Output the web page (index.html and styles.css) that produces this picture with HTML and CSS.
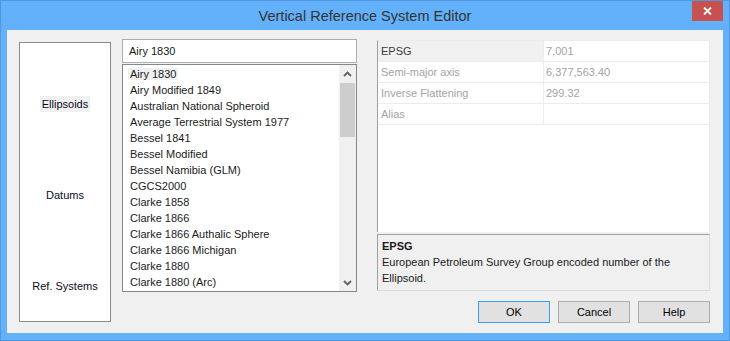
FILE: index.html
```html
<!DOCTYPE html>
<html>
<head>
    <title>Vertical Reference System Editor</title>
    <link rel="stylesheet" href="styles.css">
</head>
<body>
    <div class="window">
        <!-- Title bar -->
        <div class="titlebar">
            <span class="title">Vertical Reference System Editor</span>
            <div class="close">
                <svg width="9" height="8" viewBox="0 0 9 8">
                    <path d="M1 0.5 L8 7.5 M8 0.5 L1 7.5" stroke="#fff" stroke-width="1.8" fill="none"/>
                </svg>
            </div>
        </div>

        <div class="client">
            <!-- Category list -->
            <div class="nav">
                <span class="nav-item selected">Ellipsoids</span>
                <span class="nav-item">Datums</span>
                <span class="nav-item">Ref. Systems</span>
            </div>

            <!-- Ellipsoid picker -->
            <div class="picker">
                <div class="search">Airy 1830</div>
                <div class="list">
                    <ul class="items">
                        <li><span class="selected">Airy 1830</span></li>
                        <li><span>Airy Modified 1849</span></li>
                        <li><span>Australian National Spheroid</span></li>
                        <li><span>Average Terrestrial System 1977</span></li>
                        <li><span>Bessel 1841</span></li>
                        <li><span>Bessel Modified</span></li>
                        <li><span>Bessel Namibia (GLM)</span></li>
                        <li><span>CGCS2000</span></li>
                        <li><span>Clarke 1858</span></li>
                        <li><span>Clarke 1866</span></li>
                        <li><span>Clarke 1866 Authalic Sphere</span></li>
                        <li><span>Clarke 1866 Michigan</span></li>
                        <li><span>Clarke 1880</span></li>
                        <li><span>Clarke 1880 (Arc)</span></li>
                    </ul>
                    <div class="scrollbar">
                        <div class="arrow">
                            <svg width="9" height="6" viewBox="0 0 9 6"><path d="M1 5 L4.5 1.5 L8 5" stroke="#606060" stroke-width="1.8" fill="none"/></svg>
                        </div>
                        <div class="thumb"></div>
                        <div class="track"></div>
                        <div class="arrow">
                            <svg width="9" height="6" viewBox="0 0 9 6"><path d="M1 1 L4.5 4.5 L8 1" stroke="#606060" stroke-width="1.8" fill="none"/></svg>
                        </div>
                    </div>
                </div>
            </div>

            <!-- Properties -->
            <div class="details">
                <div class="grid">
                    <table class="props">
                        <tr class="active"><td class="name">EPSG</td><td class="value">7,001</td></tr>
                        <tr><td class="name">Semi-major axis</td><td class="value">6,377,563.40</td></tr>
                        <tr><td class="name">Inverse Flattening</td><td class="value">299.32</td></tr>
                        <tr><td class="name">Alias</td><td class="value"></td></tr>
                    </table>
                </div>
                <div class="desc">
                    <div class="desc-title">EPSG</div>
                    <div class="desc-text">European Petroleum Survey Group encoded number of the Ellipsoid.</div>
                </div>
                <div class="buttons">
                    <button class="btn default">OK</button>
                    <button class="btn">Cancel</button>
                    <button class="btn">Help</button>
                </div>
            </div>
        </div>
    </div>
</body>
</html>
```

FILE: styles.css
```css
:root {
    --frame: #62b1fa;
    --frame-edge: #4f98dd;
    --face: #f0f0f0;
    --border: #828790;
    --grid-line: #ececec;
    --muted: #a3a3a3;
    --text: #1a1a1a;
}

body {
    margin: 0;
    font-family: "Liberation Sans", Arial, sans-serif;
    font-size: 11px;
    color: var(--text);
}

.window {
    width: 730px;
    height: 341px;
    box-sizing: border-box;
    border: 1px solid var(--frame-edge);
    background: var(--frame);
    display: flex;
    flex-direction: column;
}

/* Title bar */
.titlebar {
    height: 29px;
    position: relative;
    display: flex;
    justify-content: center;
    align-items: center;
}

.title {
    font-size: 14.5px;
    color: #333;
    margin-top: 1px;
}

.close {
    position: absolute;
    top: 0;
    right: 6px;
    width: 31px;
    height: 20px;
    background: #c75050;
    display: flex;
    justify-content: center;
    align-items: center;
}

.client {
    flex: 1;
    margin: 0 6px 7px 6px;
    background: var(--face);
    display: flex;
    align-items: flex-start;
    padding-left: 12px;
}

/* Category list */
.nav {
    margin-top: 12px;
    width: 92px;
    height: 280px;
    box-sizing: border-box;
    border: 1px solid #8a8a8a;
    background: #fff;
    display: flex;
    flex-direction: column;
    align-items: center;
    padding-top: 53px;
    gap: 75px;
}

.nav-item {
    line-height: 16px;
    padding: 0 2px;
    color: #0a0a1e;
}

.nav-item.selected {
    background: var(--face);
}

/* Picker */
.picker {
    margin-top: 9px;
    margin-left: 11px;
    width: 235px;
}

.search {
    height: 24px;
    box-sizing: border-box;
    border: 1px solid #abadb3;
    background: #fff;
    padding-left: 6px;
    line-height: 22px;
    margin-bottom: 1px;
}

.list {
    height: 228px;
    box-sizing: border-box;
    border: 1px solid var(--border);
    background: #fff;
    display: flex;
}

.items {
    flex: 1;
    list-style: none;
    margin: 0;
    padding: 1px 0 0 5px;
    overflow: hidden;
}

.items li {
    height: 16px;
    line-height: 16px;
    white-space: nowrap;
}

.items span {
    padding: 0 2px;
}

.items span.selected {
    background: var(--face);
}

.scrollbar {
    width: 17px;
    background: var(--face);
    display: flex;
    flex-direction: column;
}

.arrow {
    height: 17px;
    display: flex;
    justify-content: center;
    align-items: center;
}

.thumb {
    height: 54px;
    margin: 1px 1px 0 1px;
    background: #cdcdcd;
}

.track {
    flex: 1;
}

/* Property grid */
.details {
    margin-top: 10px;
    margin-left: 20px;
    width: 333px;
    display: flex;
    flex-direction: column;
}

.grid {
    height: 192px;
    box-sizing: border-box;
    border-left: 1px solid #a0a0a0;
    border-top: 1px solid var(--grid-line);
    border-right: 1px solid var(--grid-line);
    background: #fff;
}

.props {
    width: 100%;
    border-collapse: collapse;
}

.props td {
    height: 20px;
    padding: 0 0 0 3px;
    border-bottom: 1px solid var(--grid-line);
    color: var(--muted);
    white-space: nowrap;
}

.props .name {
    width: 162px;
    border-right: 1px solid var(--grid-line);
}

.props .value {
    padding-left: 2px;
}

.props tr.active .name {
    background: var(--face);
    color: #3c3c3c;
}

.desc {
    margin-top: 2px;
    height: 57px;
    box-sizing: border-box;
    border-top: 1px solid #a0a0a0;
    border-left: 1px solid #a0a0a0;
    border-right: 1px solid #dcdcdc;
    border-bottom: 1px solid #dcdcdc;
    padding: 3px 4px 0 4px;
    line-height: 16px;
}

.desc-title {
    font-weight: bold;
}

/* Dialog buttons */
.buttons {
    margin-top: 10px;
    display: flex;
    justify-content: flex-end;
    gap: 8px;
}

.btn {
    width: 72px;
    height: 22px;
    border: 1px solid #adadad;
    background: #e1e1e1;
    font-family: inherit;
    font-size: 11px;
    color: #000;
    padding: 0;
}

.btn.default {
    border-color: #3c9cf0;
}
```
